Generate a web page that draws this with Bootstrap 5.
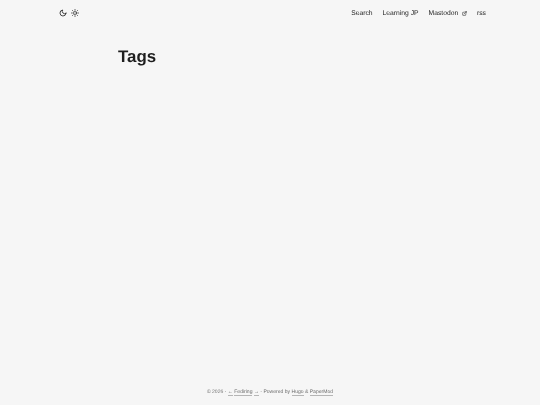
<!DOCTYPE html>
<html lang="en">
<head>
<meta charset="utf-8">
<title>Tags</title>
<link href="https://cdn.jsdelivr.net/npm/bootstrap@5.3.0/dist/css/bootstrap.min.css" rel="stylesheet">
<style>
html,body{height:100%}
body{background:#f6f6f6;color:#1e1e1e;font-family:"Liberation Sans",Arial,sans-serif;overflow:hidden;text-rendering:geometricPrecision}
.top-bar,.page-wrap,.foot-line{will-change:opacity}
.top-bar{height:25px;padding:0 54px 0 58.5px}
.mode-row{gap:4px}
.mode-btn{color:#1e1e1e;line-height:0}
.mode-btn svg{width:8px;height:8px;display:block}
.menu-link{font-size:6.75px;height:9px;color:#1e1e1e;text-decoration:none;line-height:9px}
.menu-link svg{width:5px;height:5px;margin-left:3.8px}
.menu-row{gap:10px;padding-top:1px}
.page-wrap{padding:22px 0 0 118px}
.page-title{font-size:16.875px;font-weight:700;line-height:1.2;margin:0;color:#1e1e1e}
.foot-line{font-size:5.06px;color:#6c6c6c;line-height:1;padding-bottom:10px}
.foot-line a{color:inherit;text-decoration:none;border-bottom:.4px solid #b5b5b5}
</style>
</head>
<body class="d-flex flex-column">
<nav class="top-bar d-flex align-items-center justify-content-between">
  <div class="mode-row d-flex align-items-center">
    <a class="mode-btn" href="#" aria-label="Dark theme"><svg viewBox="0 0 24 24" fill="none" stroke="currentColor" stroke-width="2.4" stroke-linecap="round" stroke-linejoin="round"><path d="M21 12.79A9 9 0 1 1 11.21 3 7 7 0 0 0 21 12.79z"/></svg></a>
    <a class="mode-btn" href="#" aria-label="Light theme"><svg viewBox="0 0 24 24" fill="none" stroke="currentColor" stroke-width="2" stroke-linecap="round" stroke-linejoin="round"><circle cx="12" cy="12" r="4.5"/><path d="M12 1v3M12 20v3M4.22 4.22l2.1 2.1M17.68 17.68l2.1 2.1M1 12h3M20 12h3M4.22 19.78l2.1-2.1M17.68 6.32l2.1-2.1"/></svg></a>
  </div>
  <div class="menu-row d-flex align-items-center">
    <a class="menu-link" href="#">Search</a>
    <a class="menu-link" href="#">Learning JP</a>
    <a class="menu-link d-inline-flex align-items-center" href="#">Mastodon<svg viewBox="0 0 24 24" fill="none" stroke="currentColor" stroke-width="2.5" stroke-linecap="round" stroke-linejoin="round"><path d="M18 13v6a2 2 0 0 1-2 2H5a2 2 0 0 1-2-2V8a2 2 0 0 1 2-2h6"/><path d="M15 3h6v6M10 14 21 3"/></svg></a>
    <a class="menu-link" href="#">rss</a>
  </div>
</nav>
<main class="page-wrap flex-grow-1">
  <h1 class="page-title">Tags</h1>
</main>
<footer class="foot-line text-center">
  <span>© 2026</span> · <a href="#">←</a> <a href="#">Fediring</a> <a href="#">→</a> · <span>Powered by <a href="#">Hugo</a> &amp; <a href="#">PaperMod</a></span>
</footer>
<script src="https://cdn.jsdelivr.net/npm/bootstrap@5.3.0/dist/js/bootstrap.bundle.min.js"></script>
</body>
</html>
